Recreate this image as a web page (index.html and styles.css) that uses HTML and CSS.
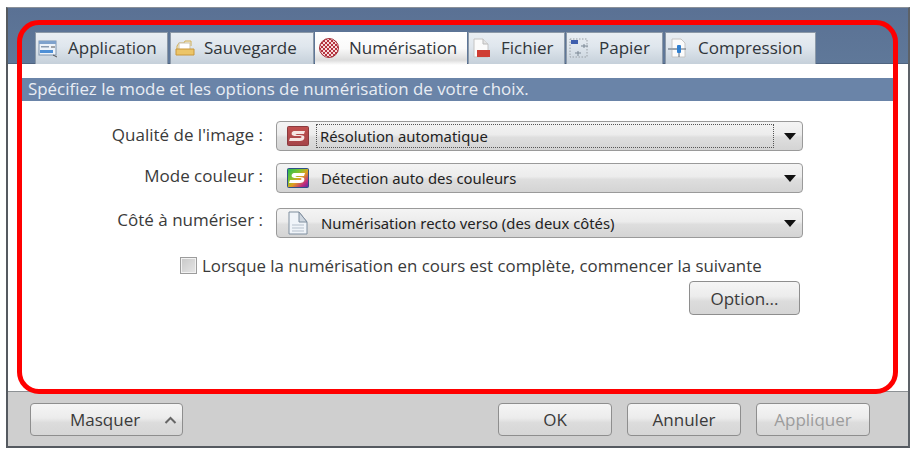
FILE: index.html
```html
<!DOCTYPE html>
<html lang="fr">
<head>
<meta charset="utf-8">
<title>Numérisation</title>
<link rel="stylesheet" href="styles.css">
</head>
<body>
<div class="window">
  <div class="tabbar">
    <div class="tab tab-app">
      <svg class="tab-icon" viewBox="0 0 20 20"><rect x="1" y="3" width="17" height="14" fill="#eef3f9" stroke="#7d93ad"/><rect x="1" y="3" width="17" height="3" fill="#7fa2cc"/><rect x="3" y="8" width="8" height="1.5" fill="#8a9bb0"/><rect x="2" y="12" width="13" height="3" fill="#4f90d6"/><path d="M13 9l4 0M15 17l4 2" stroke="#555" fill="none"/></svg>
      <span>Application</span>
    </div>
    <div class="tab tab-save">
      <svg class="tab-icon" viewBox="0 0 20 20"><path d="M2 17V8l2-3h5l1-2h6v5" fill="#f4ecd0" stroke="#d0ad55"/><rect x="4" y="5" width="11" height="7" fill="#fff" stroke="#c9c2ae"/><path d="M1 11h18v6H1z" fill="#ecc568" stroke="#c8963a"/></svg>
      <span>Sauvegarde</span>
    </div>
    <div class="tab tab-scan active">
      <svg class="tab-icon" viewBox="0 0 20 20"><defs><pattern id="chk" width="4" height="4" patternUnits="userSpaceOnUse"><rect width="4" height="4" fill="#b5333f"/><rect width="2" height="2" fill="#f7dcdc"/><rect x="2" y="2" width="2" height="2" fill="#f7dcdc"/></pattern></defs><circle cx="10" cy="10" r="9.500" fill="url(#chk)" stroke="#a5303a" stroke-width="1"/></svg>
      <span>Numérisation</span>
    </div>
    <div class="tab tab-file">
      <svg class="tab-icon" viewBox="0 0 20 20"><path d="M3 1h9l5 5v13H3z" fill="#fbfbfb" stroke="#c4c4c4"/><path d="M12 1v5h5" fill="#e4e4e4" stroke="#bbb"/><rect x="6" y="12" width="13" height="7" fill="#cf3d34"/></svg>
      <span>Fichier</span>
    </div>
    <div class="tab tab-paper">
      <svg class="tab-icon" viewBox="0 0 20 20"><rect x="1" y="1" width="17" height="18" fill="none" stroke="#9aa0a6" stroke-dasharray="1.500 1.500"/><rect x="2" y="2" width="7" height="4" fill="#3f5fae"/><path d="M12 8h7M15 6v4M6 15h6M9 13v5" stroke="#7b8794" fill="none"/></svg>
      <span>Papier</span>
    </div>
    <div class="tab tab-comp">
      <svg class="tab-icon" viewBox="0 0 20 20"><path d="M4 1h9l4 4v14H4z" fill="#fbfbfb" stroke="#c4c4c4"/><rect x="0" y="10" width="10" height="2" fill="#9aa4ae"/><rect x="9" y="7" width="4" height="8" rx="1" fill="#2f7fd0"/><path d="M11 15v4M13 11h5" stroke="#5c6b7a" fill="none"/></svg>
      <span>Compression</span>
    </div>
  </div>

  <div class="panel">
    <div class="desc">Spécifiez le mode et les options de numérisation de votre choix.</div>
    <div class="form">
      <div class="row row-quality">
        <div class="label">Qualité de l'image :</div>
        <div class="select">
          <svg class="sel-icon" viewBox="0 0 22 20"><defs><linearGradient id="redg" x1="0" y1="0" x2="0" y2="1"><stop offset="0" stop-color="#c0504e"/><stop offset="1" stop-color="#a5444a"/></linearGradient></defs><rect x=".5" y=".5" width="21" height="19" rx="1" fill="url(#redg)" stroke="#8a3a3e"/><path d="M18 5H8C5 5 4 7 5 9c1 1 3 1 8 1 2 0 2 2 0 2H3l-1 3h11c4 0 5-3 4-5-1-1-3-1-7-1-2 0-2-1 0-1h7z" fill="#f6e6e4"/></svg>
          <div class="sel-text focus">Résolution automatique</div>
          <div class="arrow"></div>
        </div>
      </div>
      <div class="row row-color">
        <div class="label">Mode couleur :</div>
        <div class="select">
          <svg class="sel-icon" viewBox="0 0 22 20"><defs><linearGradient id="rainbow" x1="0" y1="0" x2="1" y2="1"><stop offset="0" stop-color="#1fb55a"/><stop offset=".35" stop-color="#7dc42f"/><stop offset=".55" stop-color="#e0a020"/><stop offset=".8" stop-color="#c02a80"/><stop offset="1" stop-color="#5030a0"/></linearGradient></defs><rect x=".5" y=".5" width="21" height="19" rx="1" fill="url(#rainbow)" stroke="#2f4f88"/><path d="M18 5H8C5 5 4 7 5 9c1 1 3 1 8 1 2 0 2 2 0 2H3l-1 3h11c4 0 5-3 4-5-1-1-3-1-7-1-2 0-2-1 0-1h7z" fill="#fff"/></svg>
          <div class="sel-text">Détection auto des couleurs</div>
          <div class="arrow"></div>
        </div>
      </div>
      <div class="row row-side">
        <div class="label">Côté à numériser :</div>
        <div class="select">
          <svg class="sel-icon sel-icon-page" viewBox="0 0 22 24"><path d="M2 1h10l8 10v12H2z" fill="#f0f4f9" stroke="#7f8e9e"/><path d="M12 1v10h8z" fill="#cfd7e0" stroke="#7f8e9e"/><path d="M5 14h12M5 17h12M5 20h12" stroke="#b4bfcb"/></svg>
          <div class="sel-text">Numérisation recto verso (des deux côtés)</div>
          <div class="arrow"></div>
        </div>
      </div>
      <div class="check-row">
        <span class="check"></span>
        <span>Lorsque la numérisation en cours est complète, commencer la suivante</span>
      </div>
      <div class="option-row"><div class="btn btn-option">Option...</div></div>
    </div>
  </div>

  <div class="footer">
    <div class="btn btn-hide">
      <span>Masquer</span>
      <svg class="chev" viewBox="0 0 13 8"><path d="M1.500 7 6.500 2l5 5" fill="none" stroke="#666" stroke-width="2"/></svg>
    </div>
    <div class="footer-right">
      <div class="btn btn-foot">OK</div>
      <div class="btn btn-foot">Annuler</div>
      <div class="btn btn-foot disabled">Appliquer</div>
    </div>
  </div>
</div>
<div class="annotation"></div>
</body>
</html>
```

FILE: styles.css
```css
* { box-sizing: border-box; }
html, body { margin: 0; padding: 0; background: #fff; }
body {
  width: 915px; height: 450px; overflow: hidden; position: relative;
  padding: 7px 5px 2px 6px;
  font-family: "Open Sans", "Liberation Sans", Arial, sans-serif;
  color: #333;
}
.window {
  width: 904px; height: 441px;
  border: 2px solid #555a60;
  border-top: 1px solid #8a9098;
  border-right-color: #5d6268;
  display: flex; flex-direction: column;
  background: #fff;
}
.tabbar {
  height: 56px; flex: none;
  background: linear-gradient(#5a7194, #5f7899);
  padding: 24px 0 0 27px;
  display: flex; align-items: stretch;
  border-bottom: 1px solid #4f6480;
}
.tab {
  display: flex; align-items: center;
  height: 32px;
  padding-left: 2px;
  padding-bottom: 2px;
  margin-right: 1px;
  font-size: 17px;
  color: #30353a;
  background: linear-gradient(#e9eef3, #dfe6ed 45%, #c5d0da);
  border: 1px solid #8c99a8;
  border-bottom: none;
  white-space: nowrap;
}
.tab span { margin-left: 10px; }
.tab-icon { width: 20px; height: 20px; flex: none; }
.tab-app { width: 133px; margin-right: 2px; }
.tab-save { width: 144px; padding-left: 4px; }
.tab-save span { margin-left: 9px; }
.tab-scan { width: 152px; padding-left: 4px; }
.tab-file { width: 97px; margin-right: 1px; }
.tab-paper { width: 97px; margin-right: 2px; }
.tab-comp { width: 151px; }
.tab.active {
  height: 33px; margin-bottom: -1px;
  background: linear-gradient(#fff, #fafafa 50%, #dcdcdc 85%, #fff);
  border: none; position: relative;
}
.panel { flex: 1; background: #fff; padding-top: 14px; min-height: 0; }
.desc {
  height: 23px; margin: 0 0 0 11px; width: 878px;
  padding-left: 9px;
  background: #6a84a8;
  color: #e8edf4;
  font-size: 16.900px; line-height: 22px;
  white-space: nowrap;
}
.form { padding-top: 20px; }
.row { display: flex; align-items: center; height: 30px; }
.row-color { margin-top: 12px; }
.row-side { margin-top: 15px; }
.label {
  width: 255px; text-align: right;
  font-size: 17px; color: #3a3a3a;
  padding-bottom: 3px;
}
.row-color .label { padding-bottom: 5px; }
.row-side .label { padding-bottom: 7px; }
.select {
  width: 527px; height: 30px; margin-left: 13px;
  border: 1px solid #9a9a9a; border-radius: 4px;
  background: linear-gradient(#f4f4f4, #ececec 45%, #dedede 55%, #d4d4d4);
  display: flex; align-items: center;
  padding-left: 10px;
}
.sel-icon { width: 22px; height: 20px; flex: none; }
.sel-icon-page { height: 24px; }
.sel-text {
  font-family: "Noto Sans", "Open Sans", sans-serif;
  font-size: 14.850px; color: #222;
  margin-left: 11px; line-height: 22px;
  border: 1px dotted transparent;
  width: 454px; white-space: nowrap;
}
.sel-text.focus {
  border-color: #555;
  margin-left: 7px; padding-left: 3px; width: 458px;
}
.arrow {
  width: 0; height: 0; margin-left: 10px;
  border-left: 6px solid transparent;
  border-right: 6px solid transparent;
  border-top: 7px solid #111;
}
.check-row {
  display: flex; align-items: center;
  margin-top: 18px; margin-left: 172px; height: 18px;
  font-size: 16.850px; color: #3a3a3a;
  white-space: nowrap;
}
.check {
  width: 17px; height: 17px; margin-right: 5px; flex: none;
  border: 1px solid #9c9c9c;
  background: linear-gradient(135deg, #c8c8c8, #e6e6e6);
  box-shadow: inset 0 0 0 1px #f2f2f2;
}
.option-row { margin-top: 7px; padding-left: 681px; }
.btn {
  display: flex; align-items: center; justify-content: center;
  border: 1px solid #8e8e8e; border-radius: 4px;
  background: linear-gradient(#f5f5f5, #ececec 45%, #dcdcdc 60%, #d6d6d6);
  font-size: 17px; color: #3a3a3a;
}
.btn-option { width: 111px; height: 34px; }
.footer {
  height: 55px; flex: none;
  background: #cfcfcf;
  border-top: 1px solid #8d9194;
  padding: 11px 38px 0 22px;
  display: flex; justify-content: space-between; align-items: flex-start;
}
.btn-hide { width: 153px; height: 33px; justify-content: flex-start; padding-left: 39px; }
.chev { width: 13px; height: 8px; margin-left: 24px; }
.footer-right { display: flex; gap: 15px; }
.btn-foot { width: 114px; height: 33px; }
.btn-foot.disabled { color: #9c9c9c; }
.annotation {
  position: absolute; left: 17px; top: 20px;
  width: 881px; height: 374px;
  border: 5px solid #f00;
  border-radius: 22px;
  pointer-events: none;
}
```
